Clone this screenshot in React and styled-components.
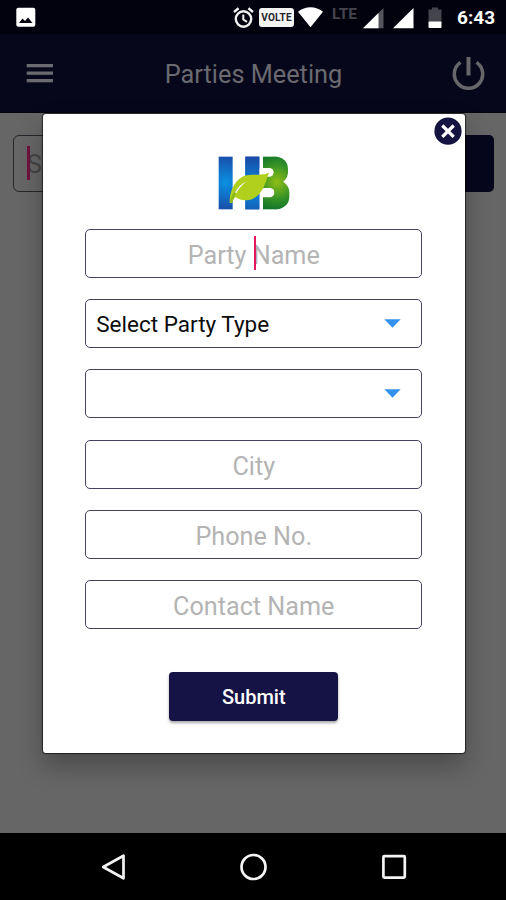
import React from 'react'
import styled, { createGlobalStyle } from 'styled-components'

const GlobalStyle = createGlobalStyle`
    * {
        box-sizing: border-box;
    }

    body {
        margin: 0;
        background: #666;
        font-family: Roboto, "Noto Sans", sans-serif;
    }
`

const Screen = styled.div`
    position: relative;
    display: flex;
    flex-direction: column;
    width: 506px;
    height: 900px;
    overflow: hidden;
    background: #666;
`

const StatusBar = styled.div`
    display: flex;
    align-items: flex-start;
    height: 34px;
    padding: 7px 11px 0 16px;
    background: #02020e;

    svg {
        flex: none;
        display: block;
    }
`

const StatusIcons = styled.div`
    display: flex;
    align-items: flex-start;
    margin-left: auto;
`

const StatusItem = styled.div`
    margin-right: ${props => props.$gap}px;
`

const Volte = styled.div`
    width: 35px;
    height: 19px;
    margin: 1px 4px 0 0;
    border-radius: 3px;
    background: #f4f4f4;
    color: #24242a;
    font-size: 10px;
    font-weight: 700;
    line-height: 19px;
    letter-spacing: 0.2px;
    text-align: center;
`

const Network = styled.div`
    width: 26px;
    margin: -1px 5px 0 0;
    color: #44444d;
    font-size: 15.5px;
    font-weight: 700;
    line-height: 17px;
`

const Clock = styled.div`
    width: 38px;
    color: #fff;
    font-size: 19px;
    font-weight: 700;
    line-height: 22px;
    white-space: nowrap;
`

const Toolbar = styled.header`
    display: flex;
    align-items: center;
    justify-content: space-between;
    height: 79px;
    padding: 0 20px 0 26px;
    background: #06071a;
    border-bottom: 1px solid #05050c;
`

const Title = styled.h1`
    margin: 4px 0 0 1px;
    color: #6a6a70;
    font-size: 25.3px;
    font-weight: 400;
    line-height: 30px;
`

const Content = styled.main`
    flex: 1;
    padding: 21.5px 12px 0 13px;
`

const SearchRow = styled.div`
    display: flex;
    justify-content: space-between;
`

const SearchBox = styled.div`
    position: relative;
    width: 340px;
    height: 57px;
    padding: 0 13px;
    border: 1.5px solid #25252b;
    border-radius: 6px;
    color: #444;
    font-size: 25px;
    line-height: 57px;
`

const SearchButton = styled.div`
    width: 120px;
    height: 57px;
    border-radius: 5px;
    background: #06071d;
`

const Caret = styled.span`
    position: absolute;
    top: ${props => props.$top}px;
    left: ${props => props.$left}px;
    width: ${props => props.$width || 2}px;
    height: 34px;
    background: ${props => props.$color};
`

const Dialog = styled.section`
    position: absolute;
    top: 114px;
    left: 43px;
    display: flex;
    flex-direction: column;
    align-items: center;
    width: 421.5px;
    height: 638.5px;
    padding-top: 41px;
    border-radius: 3px;
    background: #fff;
    box-shadow: 0 0 1px 1px rgba(0, 0, 0, 0.6), 0 13px 26px rgba(0, 0, 0, 0.28);
`

const CloseButton = styled.button`
    position: absolute;
    top: 3px;
    right: 3px;
    width: 28px;
    height: 28px;
    padding: 0;
    border: 0;
    background: none;

    svg {
        display: block;
    }
`

const Form = styled.form`
    display: flex;
    flex-direction: column;
    gap: 21.3px;
    width: 337px;
    margin-top: 17.2px;
`

const Field = styled.div`
    position: relative;
    display: flex;
    align-items: center;
    justify-content: space-between;
    height: 49px;
    padding: ${props => (props.$select ? '1px 20px 0 10px' : '0')};
    border: 1px solid #45435f;
    border-radius: 5px;
    color: #0c0c0c;
    font-size: 22.5px;
`

const Input = styled.input`
    width: 100%;
    height: 100%;
    padding: 4px 0 0;
    border: 0;
    outline: 0;
    background: transparent;
    font: 400 25.2px Roboto, sans-serif;
    text-align: center;

    &::placeholder {
        color: #b4b4b4;
        opacity: 1;
    }
`

const Arrow = styled.svg`
    display: block;
    margin-bottom: 2px;
`

const SubmitButton = styled.button`
    width: 169px;
    height: 49px;
    margin-top: 42.3px;
    padding: 2px 0 0;
    border: 0;
    border-radius: 4px;
    background: #151345;
    box-shadow: 0 2px 3px rgba(0, 0, 0, 0.35);
    color: #fff;
    font: 500 20px Roboto, sans-serif;
`

const NavBar = styled.nav`
    display: flex;
    align-items: center;
    justify-content: space-between;
    height: 67px;
    padding: 0 98px 0 100px;
    background: #000;
`

const Logo = () => (
    <svg width="73.33" height="56.67" viewBox="50 45 220 170">
        <defs>
            <radialGradient id="blue" gradientUnits="userSpaceOnUse" cx="76" cy="128" r="82">
                <stop offset="0" stopColor="#0b91e2" />
                <stop offset="1" stopColor="#184ca8" />
            </radialGradient>
            <radialGradient id="blueRight" gradientUnits="userSpaceOnUse" cx="156" cy="145" r="90">
                <stop offset="0" stopColor="#0b91e2" />
                <stop offset="1" stopColor="#184ca8" />
            </radialGradient>
            <radialGradient id="green" gradientUnits="userSpaceOnUse" cx="230" cy="126" r="84">
                <stop offset="0" stopColor="#8fbe16" />
                <stop offset="0.6" stopColor="#379326" />
                <stop offset="1" stopColor="#12762a" />
            </radialGradient>
        </defs>
        <rect x="55" y="50" width="42" height="158" fill="url(#blue)" />
        <rect x="135" y="50" width="42" height="158" fill="url(#blueRight)" />
        {/* two lobes with a notch in each */}
        <g fill="url(#green)">
            <rect x="188" y="50" width="40" height="158" />
            <rect x="190" y="50" width="73" height="82" rx="36" />
            <rect x="190" y="120" width="77" height="88" rx="38" />
        </g>
        <rect x="170" y="84" width="50" height="26" rx="13" fill="#fff" />
        <rect x="178" y="144" width="44" height="28" rx="14" fill="#fff" />
        <rect x="135" y="50" width="42" height="158" fill="url(#blueRight)" />
        <path
            d="M88 188 C87 162 98 126 126 110 C149 99 179 110 206 98 C201 109 198 124 191 139 C181 163 163 180 137 181 C124 181 113 177 105 171 C99 177 97 183 95 189 Z"
            fill="#b1cf1d"
        />
        <path d="M88 188 C92 164 112 137 139 124 C120 140 104 158 97 186 Z" fill="#8aba1d" />
        <path d="M104 157 C112 142 124 131 139 124 C124 136 114 148 108 160 Z" fill="#fff" />
    </svg>
)

const fields = [
    { label: 'Party Name', focused: true },
    { label: 'Select Party Type', select: true },
    { label: '', select: true },
    { label: 'City' },
    { label: 'Phone No.' },
    { label: 'Contact Name' },
]

export default function App() {
    return (
        <>
            <GlobalStyle />
            <Screen>
                <StatusBar>
                    <svg width="20" height="21" viewBox="0 0 20 21">
                        <rect x="0.3" y="0.8" width="19" height="19" rx="2" fill="#fff" />
                        <path d="M3 16 L6.5 11.5 L9 14 L12 10.5 L16.5 16 Z" fill="#02020e" />
                    </svg>
                    <StatusIcons>
                        <StatusItem $gap={5}>
                            <svg width="21" height="22" viewBox="0 0 21 22" fill="none" stroke="#f0f0f0">
                                <circle cx="10.5" cy="12" r="7.7" strokeWidth="2.4" />
                                <path d="M1 5 L5.6 1.3 M15.4 1.3 L20 5" strokeWidth="2.4" />
                                <path d="M10.3 7.5 V12.5 L14 14.8" strokeWidth="2" />
                            </svg>
                        </StatusItem>
                        <Volte>VOLTE</Volte>
                        <StatusItem $gap={9}>
                            <svg width="25" height="21" viewBox="0 0 25 21">
                                <path d="M0 4.8 C7 -1.4 18 -1.4 25 4.8 L12.5 20.3 Z" fill="#fff" />
                            </svg>
                        </StatusItem>
                        <Network>LTE</Network>
                        <StatusItem $gap={9}>
                            <svg width="21" height="22" viewBox="0 0 21 22">
                                <path d="M20.5 1 V21.3 H0 Z" fill="#54545d" />
                                <path d="M15.5 6 V21.3 H0 Z" fill="#fff" />
                            </svg>
                        </StatusItem>
                        <StatusItem $gap={14}>
                            <svg width="21" height="22" viewBox="0 0 21 22">
                                <path d="M20.5 1 V21.3 H0 Z" fill="#fff" />
                            </svg>
                        </StatusItem>
                        <StatusItem $gap={15}>
                            <svg width="14" height="22" viewBox="0 0 14 22">
                                <path d="M4 0.5 H10 V2.5 H13.5 V15 H0.5 V2.5 H4 Z" fill="#44444c" />
                                <rect x="0.5" y="14.5" width="13" height="6.5" rx="1" fill="#fff" />
                            </svg>
                        </StatusItem>
                        <Clock>6:43</Clock>
                    </StatusIcons>
                </StatusBar>

                <Toolbar>
                    <svg width="28" height="20" viewBox="0 0 28 20" fill="#6a6a70">
                        <rect x="0.7" y="1" width="26.3" height="3.3" />
                        <rect x="0.7" y="8.5" width="26.3" height="3.3" />
                        <rect x="0.7" y="16" width="26.3" height="3.3" />
                    </svg>
                    <Title>Parties Meeting</Title>
                    <svg width="34" height="34" viewBox="0 0 34 34" fill="none" stroke="#66666b" strokeWidth="3.5">
                        <path d="M16.5 1 V19.5" strokeWidth="4" />
                        <path d="M8.5 6.4 A14.2 14.2 0 1 0 24.5 6.4" />
                    </svg>
                </Toolbar>

                <Content>
                    <SearchRow>
                        <SearchBox>
                            S
                            <Caret $top={10} $left={12.5} $width={3} $color="#70123c" />
                        </SearchBox>
                        <SearchButton />
                    </SearchRow>
                </Content>

                <NavBar>
                    <svg width="28" height="28" viewBox="0 0 28 28" fill="none" stroke="#f4f4f4" strokeWidth="2.7">
                        <path d="M23.5 2.7 V25.3 L3.2 14 Z" strokeLinejoin="round" />
                    </svg>
                    <svg width="28" height="28" viewBox="0 0 28 28" fill="none" stroke="#f4f4f4" strokeWidth="2.7">
                        <circle cx="13.5" cy="14" r="12" />
                    </svg>
                    <svg width="28" height="28" viewBox="0 0 28 28" fill="none" stroke="#f4f4f4" strokeWidth="2.7">
                        <rect x="3.4" y="3.2" width="21.4" height="21.4" rx="1" />
                    </svg>
                </NavBar>

                <Dialog>
                    <CloseButton type="button" aria-label="Close">
                        <svg width="28" height="28" viewBox="0 0 28 28">
                            <circle cx="14" cy="14.2" r="13.6" fill="#15133f" />
                            <path d="M8.3 8.5 L19.7 19.9 M19.7 8.5 L8.3 19.9" stroke="#fff" strokeWidth="3.3" />
                        </svg>
                    </CloseButton>
                    <Logo />
                    <Form>
                        {fields.map((field, i) => (
                            <Field key={i} $select={field.select}>
                                {field.select ? (
                                    <>
                                        <span>{field.label}</span>
                                        <Arrow width="17" height="9" viewBox="0 0 17 9">
                                            <path d="M0.3 0.3 H16.7 L8.5 8.8 Z" fill="#3492ea" />
                                        </Arrow>
                                    </>
                                ) : (
                                    <Input placeholder={field.label} readOnly />
                                )}
                                {field.focused && <Caret $top={6} $left={168} $color="#e4185f" />}
                            </Field>
                        ))}
                    </Form>
                    <SubmitButton type="button">Submit</SubmitButton>
                </Dialog>
            </Screen>
        </>
    )
}
